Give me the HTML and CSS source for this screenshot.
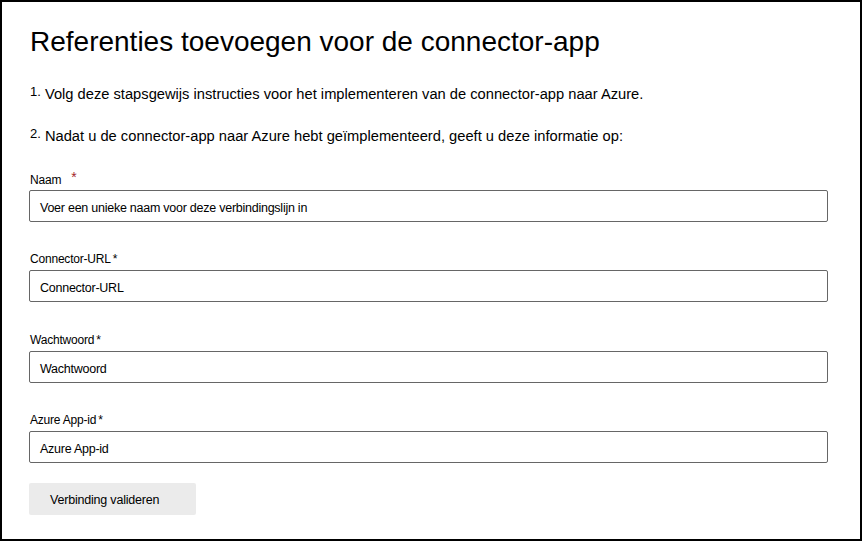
FILE: index.html
```html
<!DOCTYPE html>
<html lang="nl">
<head>
<meta charset="utf-8">
<link rel="stylesheet" href="styles.css">
</head>
<body>
<div class="frame">
  <h1 class="title">Referenties toevoegen voor de connector-app</h1>
  <p class="step step-one"><span class="num">1.</span> Volg deze stapsgewijs instructies voor het implementeren van de connector-app naar Azure.</p>
  <p class="step step-two"><span class="num">2.</span> Nadat u de connector-app naar Azure hebt geïmplementeerd, geeft u deze informatie op:</p>
  <div class="form">
    <div class="field">
      <div class="label">Naam <span class="req">*</span></div>
      <div class="input">Voer een unieke naam voor deze verbindingslijn in</div>
    </div>
    <div class="field field-wide">
      <div class="label">Connector-URL<span class="star">*</span></div>
      <div class="input">Connector-URL</div>
    </div>
    <div class="field">
      <div class="label">Wachtwoord<span class="star">*</span></div>
      <div class="input">Wachtwoord</div>
    </div>
    <div class="field">
      <div class="label">Azure App-id<span class="star">*</span></div>
      <div class="input">Azure App-id</div>
    </div>
    <div class="actions">
      <div class="button">Verbinding valideren</div>
    </div>
  </div>
</div>
</body>
</html>
```

FILE: styles.css
```css
html, body {
  margin: 0;
  padding: 0;
  background: #fff;
}
.frame {
  box-sizing: border-box;
  width: 862px;
  height: 541px;
  border: 2px solid #000;
  padding: 0 32px 0 27px;
  font-family: "Liberation Sans", Arial, sans-serif;
  color: #000;
}
.title {
  margin: 0;
  padding-top: 23px;
  font-size: 28px;
  font-weight: normal;
  line-height: 34px;
  padding-left: 1px;
}
.step {
  margin: 0;
  font-size: 14.7px;
  line-height: 18px;
  padding-left: 1px;
}
.step-one { margin-top: 24px; }
.step-two { margin-top: 22px; }
.num {
  font-size: 13px;
  vertical-align: 3px;
}
.form {
  margin-top: 27px;
  display: flex;
  flex-direction: column;
}
.field {
  display: flex;
  flex-direction: column;
  margin-bottom: 30px;
}
.field-wide { margin-bottom: 31px; }
.label {
  font-size: 12px;
  line-height: 15px;
  height: 15px;
  margin-bottom: 3px;
  padding-left: 1px;
  letter-spacing: -0.2px;
}
.req {
  color: #a4262c;
  position: relative;
  top: -2px;
  margin-left: 7px;
  font-size: 14px;
}
.star { margin-left: 2px; }
.input {
  box-sizing: border-box;
  height: 32px;
  border: 1px solid #666;
  border-radius: 2px;
  padding-left: 10px;
  padding-top: 2px;
  font-size: 12.5px;
  line-height: 30px;
  letter-spacing: -0.25px;
}
.actions {
  display: flex;
  margin-top: -10px;
}
.button {
  box-sizing: border-box;
  width: 167px;
  height: 32px;
  background: #ebebeb;
  border-radius: 2px;
  font-size: 12.5px;
  line-height: 34px;
  padding-left: 21px;
  letter-spacing: -0.2px;
}
```
